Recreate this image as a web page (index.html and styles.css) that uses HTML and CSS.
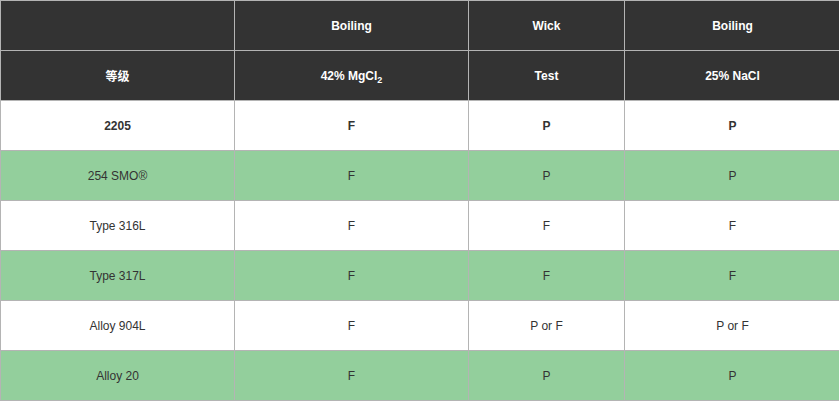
FILE: index.html
```html
<!DOCTYPE html>
<html>
<head>
<meta charset="utf-8">
<link rel="stylesheet" href="styles.css">
</head>
<body>
<table class="grid">
  <colgroup>
    <col class="c1"><col class="c2"><col class="c3"><col class="c4">
  </colgroup>
  <thead>
    <tr class="head"><th></th><th>Boiling</th><th>Wick</th><th>Boiling</th></tr>
    <tr class="head"><th>等级</th><th>42% MgCl<sub>2</sub></th><th>Test</th><th>25% NaCl</th></tr>
  </thead>
  <tbody>
    <tr class="white strong"><td>2205</td><td>F</td><td>P</td><td>P</td></tr>
    <tr class="green"><td>254 SMO®</td><td>F</td><td>P</td><td>P</td></tr>
    <tr class="white"><td>Type 316L</td><td>F</td><td>F</td><td>F</td></tr>
    <tr class="green"><td>Type 317L</td><td>F</td><td>F</td><td>F</td></tr>
    <tr class="white"><td>Alloy 904L</td><td>F</td><td>P or F</td><td>P or F</td></tr>
    <tr class="green"><td>Alloy 20</td><td>F</td><td>P</td><td>P</td></tr>
  </tbody>
</table>
</body>
</html>
```
FILE: styles.css
```css
html, body {
  margin: 0;
  padding: 0;
  background: #ffffff;
}
.grid {
  border-collapse: collapse;
  table-layout: fixed;
  width: 840px;
  font-family: "Liberation Sans", Arial, "Noto Sans CJK SC", sans-serif;
  font-size: 12px;
  color: #333333;
}
.c1 { width: 234px; }
.c2 { width: 234px; }
.c3 { width: 156px; }
.c4 { width: 216px; }
.grid th, .grid td {
  border: 1px solid #b4b4b4;
  height: 49px;
  padding: 0;
  text-align: center;
  vertical-align: middle;
}
.head th {
  background: #333333;
  color: #ffffff;
  font-weight: bold;
}
.head sub {
  font-size: 9px;
  vertical-align: -3px;
  line-height: 0;
}
.white td { background: #ffffff; }
.green td { background: #93cf9c; }
.strong td { font-weight: bold; }
```
